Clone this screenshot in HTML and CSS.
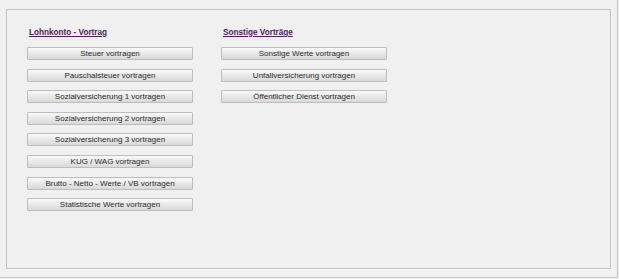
FILE: index.html
```html
<!DOCTYPE html>
<html lang="de">
<head>
    <meta charset="UTF-8">
    <title>Vorträge</title>
    <link rel="stylesheet" href="styles.css">
</head>
<body>
    <div class="frame">
        <div class="panel">
            <div class="column">
                <h2 class="column-title">Lohnkonto - Vortrag</h2>
                <button class="btn">Steuer vortragen</button>
                <button class="btn">Pauschalsteuer vortragen</button>
                <button class="btn">Sozialversicherung 1 vortragen</button>
                <button class="btn">Sozialversicherung 2 vortragen</button>
                <button class="btn">Sozialversicherung 3 vortragen</button>
                <button class="btn">KUG / WAG vortragen</button>
                <button class="btn">Brutto - Netto - Werte / VB vortragen</button>
                <button class="btn">Statistische Werte vortragen</button>
            </div>
            <div class="column">
                <h2 class="column-title">Sonstige Vorträge</h2>
                <button class="btn">Sonstige Werte vortragen</button>
                <button class="btn">Unfallversicherung vortragen</button>
                <button class="btn">Öffentlicher Dienst vortragen</button>
            </div>
        </div>
    </div>
</body>
</html>
```

FILE: styles.css
```css
* {
    margin: 0;
    padding: 0;
    box-sizing: border-box;
}

body {
    background-color: #f0f0f0;
    font-family: "Liberation Sans", Arial, sans-serif;
    color: #2a2a2a;
}

.frame {
    width: 618px;
    height: 278px;
    border-right: 1px solid #c6c6c6;
    border-bottom: 1px solid #c6c6c6;
    padding: 9px 0 0 6px;
}

.panel {
    width: 605px;
    height: 260px;
    border: 1px solid #c2c2c2;
    box-shadow: 1px 1px 0 #fafafa;
    display: flex;
    gap: 28px;
    padding: 18px 0 0 20px;
}

.column {
    width: 166px;
    display: flex;
    flex-direction: column;
}

.column-title {
    font-size: 8.2px;
    font-weight: bold;
    color: #4c1f55;
    text-decoration: underline;
    line-height: 10px;
    padding-left: 2px;
    margin-bottom: 9px;
}

.btn {
    height: 13px;
    margin-bottom: 8.6px;
    border: 1px solid #bdbdbd;
    border-radius: 1px;
    background: linear-gradient(#fafafa, #e6e6e6 55%, #d9d9d9);
    font-family: "Liberation Sans", Arial, sans-serif;
    font-size: 8px;
    color: #2a2a2a;
    line-height: 11px;
    cursor: pointer;
}
```
